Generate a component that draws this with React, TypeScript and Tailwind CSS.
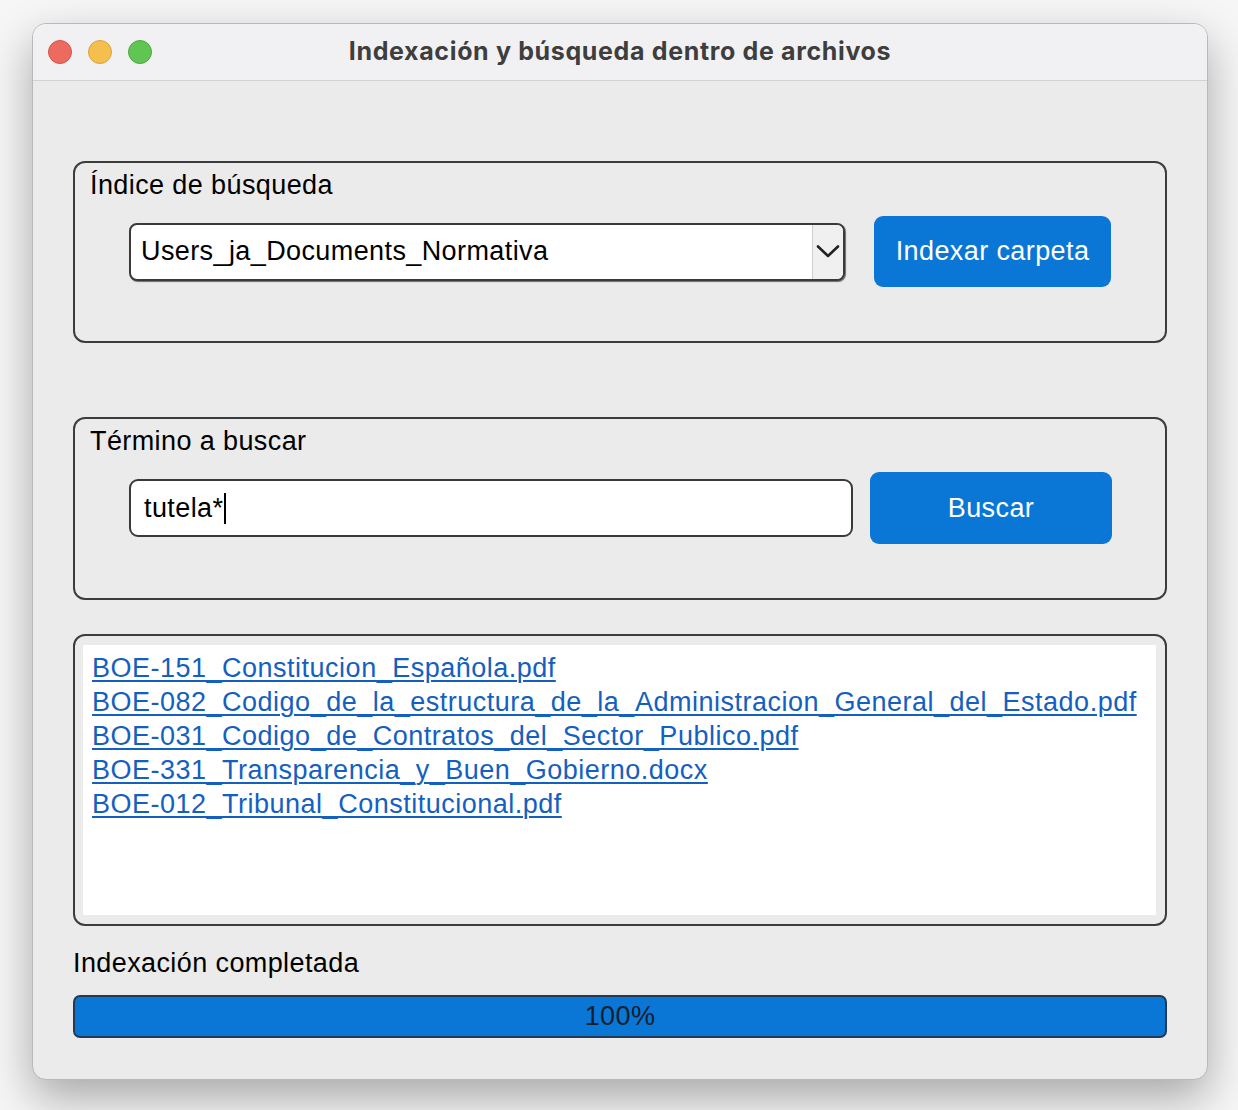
import React from "react";

const files = [
  "BOE-151_Constitucion_Española.pdf",
  "BOE-082_Codigo_de_la_estructura_de_la_Administracion_General_del_Estado.pdf",
  "BOE-031_Codigo_de_Contratos_del_Sector_Publico.pdf",
  "BOE-331_Transparencia_y_Buen_Gobierno.docx",
  "BOE-012_Tribunal_Constitucional.pdf",
];

const body = "font-['Liberation_Sans',Arial,sans-serif] text-[27px] tracking-[0.4px]";

export default function App() {
  return (
    <div className="min-h-[1110px] w-full bg-[#f6f6f6] pt-[23px] pl-[32px]">
      <div className="w-[1176px] rounded-[14px] bg-[#ebebeb] border border-[#b9b9b9] shadow-[0_18px_45px_rgba(0,0,0,0.32)] overflow-hidden">
        {/* Title bar */}
        <div className="grid h-[57px] grid-cols-[1fr_auto_1fr] items-center border-b border-[#d2d2d2] bg-[#f1f1f3]">
          <div className="flex items-center gap-[16px] pl-[15px]">
            <span className="h-[24px] w-[24px] rounded-full bg-[#ed6a5e] border border-[#d3554a]" />
            <span className="h-[24px] w-[24px] rounded-full bg-[#f5bf4f] border border-[#d8a23c]" />
            <span className="h-[24px] w-[24px] rounded-full bg-[#61c554] border border-[#4ea83e]" />
          </div>
          <div className="font-['Inter',sans-serif] text-[25px] font-bold tracking-[0.65px] text-[#3e3e3e]">
            Indexación y búsqueda dentro de archivos
          </div>
          <div />
        </div>

        {/* Body */}
        <div className={`px-[40px] pt-[80px] pb-[41px] text-black ${body}`}>
          {/* Group 1 */}
          <div className="rounded-[12px] border-2 border-[#3c3c3c] pt-[6px] pb-[54px]">
            <div className="pl-[15px] leading-[32px]">Índice de búsqueda</div>
            <div className="mt-[15px] flex items-center pl-[54px]">
              <div className="flex h-[58px] w-[716px] overflow-hidden rounded-[8px] border-2 border-[#3a3a3a] bg-white shadow-[1px_1px_1px_rgba(0,0,0,0.55)]">
                <div className="flex flex-1 items-center pl-[10px] leading-none">
                  Users_ja_Documents_Normativa
                </div>
                <div className="flex w-[31px] items-center justify-center border-l border-[#cfcfcf] bg-[#f0f0f0]">
                  <svg width="24" height="15" viewBox="0 0 24 15" fill="none">
                    <path d="M2 2.5 L12 12 L22 2.5" stroke="#222" strokeWidth="2.6" strokeLinecap="round" strokeLinejoin="round" />
                  </svg>
                </div>
              </div>
              <button className="ml-[29px] h-[71px] w-[237px] rounded-[9px] bg-[#0a77d6] text-white leading-none">
                Indexar carpeta
              </button>
            </div>
          </div>

          {/* Group 2 */}
          <div className="mt-[74px] rounded-[12px] border-2 border-[#3c3c3c] pt-[6px] pb-[54px]">
            <div className="pl-[15px] leading-[32px]">Término a buscar</div>
            <div className="mt-[15px] flex items-center pl-[54px]">
              <div className="flex h-[58px] w-[724px] items-center rounded-[9px] border-2 border-[#3a3a3a] bg-white pl-[13px] leading-none">
                <span>tutela*</span>
                <span className="ml-[1px] inline-block h-[31px] w-[2px] bg-black" />
              </div>
              <button className="ml-[17px] h-[72px] w-[242px] rounded-[9px] bg-[#0a77d6] text-white leading-none">
                Buscar
              </button>
            </div>
          </div>

          {/* Results */}
          <div className="mt-[34px] h-[292px] rounded-[12px] border-2 border-[#3c3c3c] pt-[9px] pl-[8px] pr-[9px] pb-[9px]">
            <div className="h-full bg-white pl-[9px] pt-[6px]">
              {files.map((f) => (
                <div key={f} className="leading-[34px]">
                  <a
                    href="#"
                    className="text-[#1460c0] underline decoration-[1.5px] underline-offset-[3px] tracking-[0.5px]"
                  >
                    {f}
                  </a>
                </div>
              ))}
            </div>
          </div>

          {/* Status */}
          <div className="mt-[21px] leading-[32px]">Indexación completada</div>
          <div className="mt-[16px] flex h-[43px] items-center justify-center rounded-[7px] border-2 border-[#233a52] bg-[#0a77d6] leading-none text-[#10202f]">
            100%
          </div>
        </div>
      </div>
    </div>
  );
}
